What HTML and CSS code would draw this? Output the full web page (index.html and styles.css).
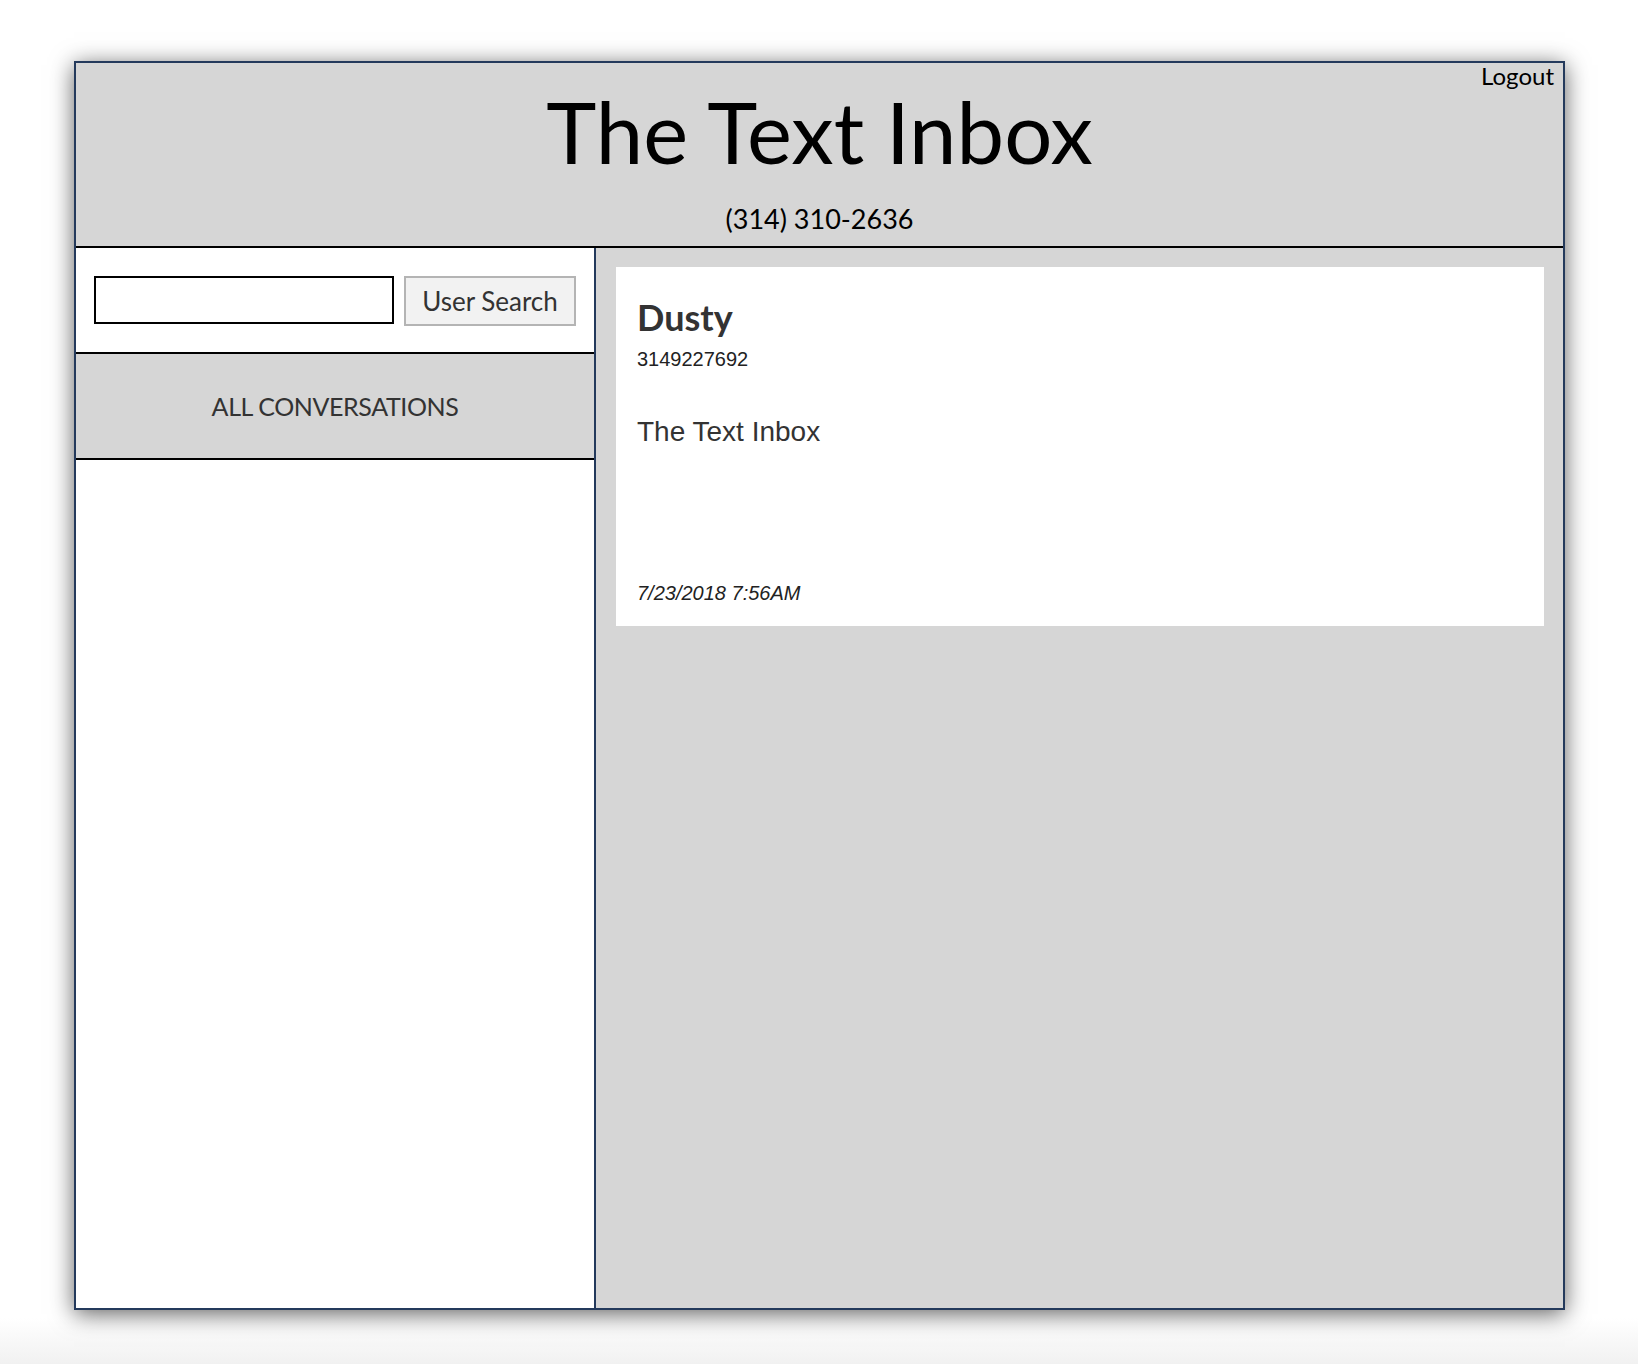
FILE: index.html
```html
<!DOCTYPE html>
<html lang="en">
<head>
<meta charset="utf-8">
<title>The Text Inbox</title>
<link rel="stylesheet" href="styles.css">
</head>
<body>
<div class="app">
  <header class="header">
    <a class="logout" href="#">Logout</a>
    <h1 class="title">The Text Inbox</h1>
    <div class="number">(314) 310-2636</div>
  </header>
  <div class="content">
    <aside class="sidebar">
      <form class="search">
        <input class="search-input" type="text">
        <button class="search-btn" type="button">User Search</button>
      </form>
      <div class="all-conv">ALL CONVERSATIONS</div>
      <div class="conv-list"></div>
    </aside>
    <main class="main">
      <div class="card">
        <h2 class="card-name">Dusty</h2>
        <div class="card-phone">3149227692</div>
        <div class="card-msg">The Text Inbox</div>
        <div class="card-date">7/23/2018 7:56AM</div>
      </div>
    </main>
  </div>
</div>
</body>
</html>
```
FILE: styles.css
```css
html {
  height: 100%;
}
body {
  margin: 0;
  padding: 61px 0 0;
  min-height: 100%;
  box-sizing: border-box;
  background: linear-gradient(to bottom, #ffffff 0, #ffffff calc(100% - 46px), #f1f1f1 100%);
  font-family: "Lato", "Liberation Sans", sans-serif;
}
.app {
  width: 1491px;
  height: 1249px;
  margin: 0 auto 0 74px;
  box-sizing: border-box;
  border: 2px solid #243a5c;
  display: flex;
  flex-direction: column;
  box-shadow: 0 4px 22px rgba(0, 0, 0, 0.62);
  background: #fff;
}
.header {
  position: relative;
  flex: none;
  background: #d6d6d6;
  border-bottom: 2px solid #000;
  text-align: center;
  padding-top: 18px;
  box-sizing: content-box;
  height: 165px;
}
.logout {
  position: absolute;
  top: -1px;
  right: 9px;
  font-size: 24px;
  line-height: 28px;
  color: #000;
  text-decoration: none;
}
.title {
  margin: 0;
  font-size: 85px;
  font-weight: 400;
  line-height: 100px;
  color: #000;
}
.number {
  margin-top: 22px;
  font-size: 27px;
  line-height: 32px;
  color: #000;
}
.content {
  flex: 1;
  display: flex;
  min-height: 0;
}
.sidebar {
  width: 518px;
  flex: none;
  border-right: 2px solid #243a5c;
  background: #fff;
  display: flex;
  flex-direction: column;
}
.search {
  margin: 0;
  padding: 28px 18px;
  border-bottom: 2px solid #000;
  display: flex;
  align-items: flex-start;
  gap: 10px;
  box-sizing: content-box;
  height: 48px;
}
.search-input {
  width: 300px;
  height: 48px;
  box-sizing: border-box;
  border: 2px solid #000;
  margin: 0;
  padding: 0 8px;
  font-size: 22px;
  background: #fff;
}
.search-btn {
  width: 172px;
  height: 50px;
  box-sizing: border-box;
  margin: 0;
  padding: 0;
  border: 2px solid #b4b4b4;
  background: #f2f2f2;
  font-family: "Lato", "Liberation Sans", sans-serif;
  font-size: 26px;
  color: #333;
}
.all-conv {
  height: 104px;
  background: #d6d6d6;
  border-bottom: 2px solid #000;
  display: flex;
  align-items: center;
  justify-content: center;
  font-size: 25px;
  letter-spacing: -0.4px;
  color: #333;
}
.conv-list {
  flex: 1;
}
.main {
  flex: 1;
  background: #d6d6d6;
  padding: 19px 19px 19px 20px;
}
.card {
  background: #fff;
  padding: 27px 21px 21px;
  font-family: "Liberation Sans", Arial, sans-serif;
  color: #333;
}
.card-name {
  margin: 0;
  font-family: "Lato", "Liberation Sans", sans-serif;
  font-size: 36px;
  font-weight: 700;
  line-height: 46px;
  color: #333;
}
.card-phone {
  margin-top: 7px;
  font-size: 20px;
  line-height: 24px;
  color: #222;
}
.card-msg {
  margin-top: 45px;
  font-size: 28px;
  line-height: 32px;
  color: #333;
}
.card-date {
  margin-top: 133px;
  font-size: 20px;
  line-height: 24px;
  font-style: italic;
  color: #222;
}
```
